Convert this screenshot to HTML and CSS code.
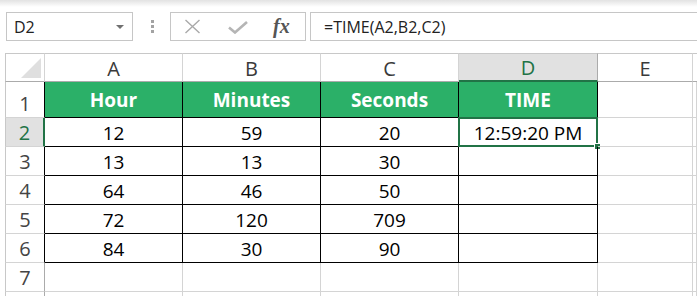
FILE: index.html
```html
<!DOCTYPE html>
<html lang="en">
<head>
<meta charset="utf-8">
<title>TIME function</title>
<link rel="stylesheet" href="styles.css">
</head>
<body>
<div class="topfade"></div>
<div class="formula-bar">
  <div class="namebox"><span class="ref">D2</span><span class="caret"></span></div>
  <div class="grip"><i></i><i></i><i></i></div>
  <div class="fxbox">
    <svg class="ic-x" width="17" height="15" viewBox="0 0 17 15"><path d="M1.5 1 L15.5 14 M15.5 1 L1.5 14" stroke="#a9a9a9" stroke-width="1.4" fill="none"/></svg>
    <svg class="ic-ok" width="20" height="13" viewBox="0 0 20 13"><path d="M1 6.5 L7 11.5 L19 1" stroke="#b5b5b5" stroke-width="2.6" fill="none"/></svg>
    <span class="fx">fx</span>
  </div>
  <div class="formula">=TIME(A2,B2,C2)</div>
</div>
<div class="sheet">
  <div class="corner"><span class="tri"></span></div>
  <div class="ch">A</div><div class="ch">B</div><div class="ch">C</div><div class="ch ch-sel">D</div><div class="ch">E</div><div class="ch ch-last"></div>

  <div class="rh rh-t">1</div>
  <div class="c t hd">Hour</div><div class="c t hd">Minutes</div><div class="c t hd">Seconds</div><div class="c t hd">TIME</div><div class="c"></div><div class="c"></div>

  <div class="rh rh-sel">2</div>
  <div class="c t">12</div><div class="c t">59</div><div class="c t">20</div><div class="c t sel">12:59:20 PM<span class="handle"></span></div><div class="c"></div><div class="c"></div>

  <div class="rh rh-t">3</div>
  <div class="c t">13</div><div class="c t">13</div><div class="c t">30</div><div class="c t"></div><div class="c"></div><div class="c"></div>

  <div class="rh rh-t">4</div>
  <div class="c t">64</div><div class="c t">46</div><div class="c t">50</div><div class="c t"></div><div class="c"></div><div class="c"></div>

  <div class="rh rh-t">5</div>
  <div class="c t">72</div><div class="c t">120</div><div class="c t">709</div><div class="c t"></div><div class="c"></div><div class="c"></div>

  <div class="rh rh-t">6</div>
  <div class="c t">84</div><div class="c t">30</div><div class="c t">90</div><div class="c t"></div><div class="c"></div><div class="c"></div>

  <div class="rh">7</div>
  <div class="c"></div><div class="c"></div><div class="c"></div><div class="c"></div><div class="c"></div><div class="c"></div>

  <div class="rh rh-stub"></div>
  <div class="c stub"></div><div class="c stub"></div><div class="c stub"></div><div class="c stub"></div><div class="c stub"></div><div class="c stub"></div>
</div>
</body>
</html>
```
FILE: styles.css
```css
html, body {
  margin: 0;
  padding: 0;
  background: #ffffff;
  overflow: hidden;
  height: 296px;
}
body {
  font-family: "Open Sans", "Noto Sans", sans-serif;
  color: #000;
}
.topfade {
  height: 7px;
  background: linear-gradient(#e2e2e2, #ffffff);
}
.formula-bar {
  display: flex;
  align-items: stretch;
  height: 29px;
  margin-top: 5px;
  padding-left: 6px;
}
.namebox {
  box-sizing: border-box;
  width: 127px;
  border: 1px solid #c6c6c6;
  display: flex;
  align-items: center;
  justify-content: space-between;
  padding: 0 8px 0 7px;
  font-size: 16px;
  color: #222;
}
.caret {
  width: 0;
  height: 0;
  border-left: 4px solid transparent;
  border-right: 4px solid transparent;
  border-top: 4px solid #707070;
  margin-top: 1px;
}
.grip {
  width: 3px;
  margin: 0 16px 0 18px;
  display: flex;
  flex-direction: column;
  justify-content: center;
  gap: 2px;
}
.grip i {
  display: block;
  width: 3px;
  height: 3px;
  background: #a3a3a3;
}
.fxbox {
  box-sizing: border-box;
  width: 136px;
  border: 1px solid #c6c6c6;
  display: flex;
  align-items: center;
  padding-left: 13px;
}
.ic-ok {
  margin-left: 27px;
  margin-top: 2px;
}
.fx {
  margin-left: 25px;
  font-family: "Liberation Serif", "DejaVu Serif", serif;
  font-style: italic;
  font-weight: bold;
  font-size: 20px;
  color: #555;
  line-height: 1;
  margin-top: -2px;
}
.formula {
  flex: 1;
  margin-left: 4px;
  border: 1px solid #c6c6c6;
  border-right: none;
  display: flex;
  align-items: center;
  padding-left: 13px;
  font-size: 16px;
  color: #222;
}
.sheet {
  margin-top: 12px;
  margin-left: 5px;
  display: grid;
  grid-template-columns: 40px 138px 138px 138px 139px 95px 1fr;
  grid-template-rows: 29px 36px repeat(6, 29px) 4px;
}
.sheet > div {
  box-sizing: border-box;
  position: relative;
}
.corner {
  border-top: 1px solid #c8c8c8;
  border-left: 1px solid #c8c8c8;
  border-right: 1px solid #d4d4d4;
  border-bottom: 1px solid #ababab;
}
.tri {
  position: absolute;
  right: 3px;
  bottom: 3px;
  width: 0;
  height: 0;
  border-left: 20px solid transparent;
  border-bottom: 20px solid #dfdfdf;
}
.ch {
  border-top: 1px solid #c8c8c8;
  border-right: 1px solid #d4d4d4;
  border-bottom: 1px solid #ababab;
  display: flex;
  align-items: center;
  justify-content: center;
  font-size: 20px;
  line-height: 27px;
  padding-top: 1px;
  color: #3a3a3a;
}
.ch-last {
  border-right: none;
}
.ch-sel {
  background: #e1e1e1;
  color: #217346;
  border-bottom: 2px solid #217346;
  border-right-color: #ababab;
}
.rh {
  border-left: 1px solid #c8c8c8;
  border-right: 1px solid #ababab;
  border-bottom: 1px solid #d4d4d4;
  display: flex;
  align-items: flex-end;
  justify-content: center;
  font-size: 20px;
  line-height: 26px;
  color: #444;
}
.rh-t {
  border-right-color: #000;
}
.rh-sel {
  background: #e1e1e1;
  color: #217346;
  border-right: 2px solid #217346;
}
.rh-stub {
  border-bottom: none;
}
.c {
  border-right: 1px solid #d4d4d4;
  border-bottom: 1px solid #d4d4d4;
  display: flex;
  align-items: center;
  justify-content: center;
  font-size: 19px;
  line-height: 26px;
  padding-top: 2px;
  white-space: nowrap;
}
.c.stub {
  border-bottom: none;
  padding-top: 0;
}
.c.t {
  border-right-color: #000;
  border-bottom-color: #000;
}
.c.hd {
  background: #2bb068;
  color: #fff;
  font-weight: bold;
  padding-top: 0;
}
.sel::before {
  content: "";
  position: absolute;
  left: -1px;
  top: -1px;
  right: -1px;
  bottom: -1px;
  border: 2px solid #217346;
}
.handle {
  position: absolute;
  right: -4px;
  bottom: -4px;
  width: 5px;
  height: 5px;
  background: #217346;
  border: 1px solid #fff;
}
```
